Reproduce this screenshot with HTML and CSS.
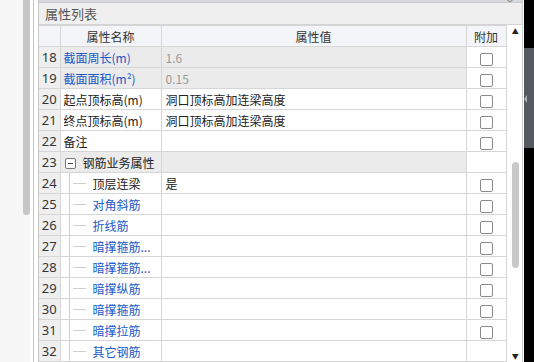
FILE: index.html
```html
<!DOCTYPE html>
<html lang="zh-CN">
  <head>
    <meta charset="UTF-8" />
    <meta name="viewport" content="width=device-width, initial-scale=1.0" />
    <title>属性列表</title>
    <link rel="stylesheet" href="styles.css">
  </head>
  <body>
    <div class="side">
      <div class="side-track"><div class="side-thumb"></div></div>
      <div class="side-gap"></div>
    </div>
    <div class="panel">
      <div class="topbar"><span class="close">×</span></div>
      <div class="title">属性列表</div>
      <div class="body">
        <table class="grid">
          <colgroup>
            <col class="c-num" />
            <col class="c-name" />
            <col class="c-val" />
            <col class="c-add" />
          </colgroup>
          <thead>
            <tr>
              <th></th>
              <th>属性名称</th>
              <th>属性值</th>
              <th>附加</th>
            </tr>
          </thead>
          <tbody>
            <tr class="ro">
              <td class="num">18</td>
              <td class="name blue">截面周长(m)</td>
              <td class="val">1.6</td>
              <td class="add"><span class="check"></span></td>
            </tr>
            <tr class="ro">
              <td class="num">19</td>
              <td class="name blue">截面面积(m²)</td>
              <td class="val">0.15</td>
              <td class="add"><span class="check"></span></td>
            </tr>
            <tr>
              <td class="num">20</td>
              <td class="name">起点顶标高(m)</td>
              <td class="val">洞口顶标高加连梁高度</td>
              <td class="add"><span class="check"></span></td>
            </tr>
            <tr>
              <td class="num">21</td>
              <td class="name">终点顶标高(m)</td>
              <td class="val">洞口顶标高加连梁高度</td>
              <td class="add"><span class="check"></span></td>
            </tr>
            <tr>
              <td class="num">22</td>
              <td class="name">备注</td>
              <td class="val"></td>
              <td class="add"><span class="check"></span></td>
            </tr>
            <tr class="group">
              <td class="num">23</td>
              <td class="name"><span class="toggle"></span>钢筋业务属性</td>
              <td class="val"></td>
              <td class="add"></td>
            </tr>
            <tr>
              <td class="num">24</td>
              <td class="name tree">顶层连梁</td>
              <td class="val">是</td>
              <td class="add"><span class="check"></span></td>
            </tr>
            <tr>
              <td class="num">25</td>
              <td class="name tree blue">对角斜筋</td>
              <td class="val"></td>
              <td class="add"><span class="check"></span></td>
            </tr>
            <tr>
              <td class="num">26</td>
              <td class="name tree blue">折线筋</td>
              <td class="val"></td>
              <td class="add"><span class="check"></span></td>
            </tr>
            <tr>
              <td class="num">27</td>
              <td class="name tree blue">暗撑箍筋...</td>
              <td class="val"></td>
              <td class="add"><span class="check"></span></td>
            </tr>
            <tr>
              <td class="num">28</td>
              <td class="name tree blue">暗撑箍筋...</td>
              <td class="val"></td>
              <td class="add"><span class="check"></span></td>
            </tr>
            <tr>
              <td class="num">29</td>
              <td class="name tree blue">暗撑纵筋</td>
              <td class="val"></td>
              <td class="add"><span class="check"></span></td>
            </tr>
            <tr>
              <td class="num">30</td>
              <td class="name tree blue">暗撑箍筋</td>
              <td class="val"></td>
              <td class="add"><span class="check"></span></td>
            </tr>
            <tr>
              <td class="num">31</td>
              <td class="name tree blue">暗撑拉筋</td>
              <td class="val"></td>
              <td class="add"><span class="check"></span></td>
            </tr>
            <tr>
              <td class="num">32</td>
              <td class="name tree blue">其它钢筋</td>
              <td class="val"></td>
              <td class="add"></td>
            </tr>
          </tbody>
        </table>
        <div class="vscroll">
          <span class="arrow">▲</span>
          <div class="vtrack"><div class="vthumb"></div></div>
          <span class="arrow">▼</span>
        </div>
      </div>
    </div>
    <div class="edge">
      <div class="edge-top"></div>
      <div class="edge-mid"><span class="edge-tab"></span></div>
      <div class="edge-bottom"></div>
    </div>
  </body>
</html>
```

FILE: styles.css
```css
* {
  box-sizing: border-box;
}

body {
  margin: 0;
  width: 534px;
  height: 362px;
  overflow: hidden;
  display: flex;
  background-color: #fff;
  font-family: "Noto Sans CJK SC", "Noto Sans", sans-serif;
  font-size: 12px;
  color: #222;
}

/* left strip with its scrollbar */
.side {
  width: 38px;
  display: flex;
  flex-shrink: 0;
}

.side-track {
  width: 30px;
  padding-left: 23px;
  background-color: #f7f7f7;
}

.side-thumb {
  width: 7px;
  height: 215px;
  background-color: #c6c6c6;
  border-radius: 0 0 4px 4px;
}

.side-gap {
  flex: 1;
  border-left: 3px solid #fff;
  background-color: #fff;
  box-shadow: inset 1px 0 0 #c4c4c4;
}

/* main panel */
.panel {
  width: 485px;
  flex-shrink: 0;
  display: flex;
  flex-direction: column;
  border-left: 1px solid #c8c8c8;
  border-right: 1px solid #cfcfcf;
}

.topbar {
  height: 6px;
  background-color: #d6d8dd;
  border-bottom: 1px solid #c9cbd0;
  display: flex;
  justify-content: flex-end;
  overflow: hidden;
}

.close {
  font-size: 12px;
  line-height: 4px;
  color: #888;
  padding-right: 6px;
}

.title {
  height: 22px;
  line-height: 21px;
  padding-left: 6px;
  font-size: 13px;
  color: #555;
  background-color: #efefef;
  border-bottom: 1px solid #d4d4d4;
}

.body {
  flex: 1;
  display: flex;
}

.grid {
  width: 467px;
  table-layout: fixed;
  border-collapse: collapse;
}

.c-num { width: 21px; }
.c-name { width: 101px; }
.c-val { width: 305px; }
.c-add { width: 40px; }

.grid th,
.grid td {
  height: 21px;
  padding: 0;
  border: 1px solid #d6d6d6;
  line-height: 19px;
  white-space: nowrap;
  overflow: hidden;
}

.grid tr > :first-child {
  border-left: none;
}

.grid th {
  font-weight: normal;
  font-size: 12px;
  color: #333;
  background-color: #f3f5f8;
  text-align: center;
}

.grid thead th:first-child {
  background-color: #f3f5f8;
}

.grid td.num {
  text-align: center;
  font-family: "Noto Sans", "Open Sans", sans-serif;
  font-size: 13px;
  color: #333;
  background-color: #efefef;
}

.grid td.name {
  padding-left: 3px;
}

.grid td.val {
  padding-left: 4px;
}

.grid td.add {
  text-align: center;
}

.grid tr.ro td.name,
.grid tr.ro td.val,
.grid tr.group td.name,
.grid tr.group td.val {
  background-color: #ebebeb;
}

.grid tr.ro td.val {
  color: #9a9a9a;
}

.blue {
  color: #2057c8;
}

.check {
  display: inline-block;
  width: 13px;
  height: 13px;
  border: 1px solid #8a8a8a;
  border-radius: 2px;
  background-color: #fff;
  vertical-align: middle;
}

.toggle {
  display: inline-block;
  width: 11px;
  height: 11px;
  margin: 0 7px 0 1px;
  border: 1px solid #777;
  border-radius: 2px;
  vertical-align: -1px;
  background: linear-gradient(#444, #444) center / 5px 1px no-repeat, #fff;
}

.grid td.tree {
  padding-left: 32px;
  background:
    linear-gradient(#cfcfcf, #cfcfcf) 8px 0 / 1px 100% no-repeat,
    linear-gradient(#cfcfcf, #cfcfcf) 12px 50% / 13px 1px no-repeat;
}

/* right scrollbar of the grid */
.vscroll {
  width: 16px;
  display: flex;
  flex-direction: column;
  align-items: center;
  padding-top: 0;
}

.arrow {
  font-size: 7px;
  line-height: 12px;
  color: #222;
  padding-left: 2px;
}

.vtrack {
  flex: 1;
  padding-top: 125px;
  padding-left: 2px;
}

.vthumb {
  width: 7px;
  height: 106px;
  border-radius: 4px;
  background-color: #c8c8c8;
}

/* dark edge on the right */
.edge {
  flex: 1;
  display: flex;
  flex-direction: column;
  border-left: 1px solid #fff;
}

.edge-top {
  height: 48px;
  background-color: #000;
}

.edge-mid {
  height: 100px;
  background-color: #555a61;
  display: flex;
  align-items: center;
}

.edge-tab {
  width: 0;
  height: 0;
  margin-top: 2px;
  border-top: 4px solid transparent;
  border-bottom: 4px solid transparent;
  border-right: 3px solid #aab0b8;
}

.edge-bottom {
  flex: 1;
  background-color: #000;
}
```
